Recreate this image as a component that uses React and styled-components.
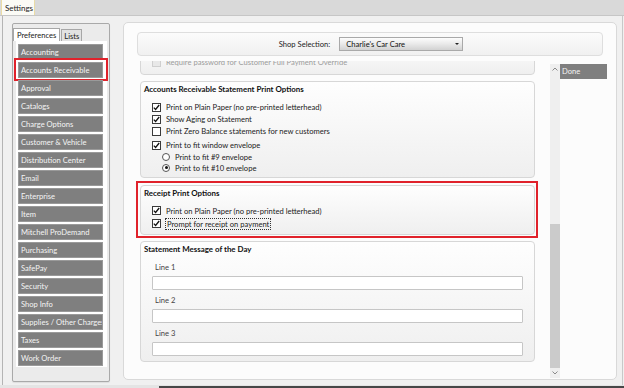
import React from 'react';
import styled, { createGlobalStyle } from 'styled-components';

const Global = createGlobalStyle`
  html, body { margin: 0; padding: 0; background: #f0f0f0; }
  body { font-family: Lato, "Open Sans", sans-serif; }
  * { box-sizing: border-box; }
`;

const FS = '7.6px';

const Window = styled.div`
  width: 624px;
  height: 388px;
  display: flex;
  flex-direction: column;
  background: #f0f0f0;
  overflow: hidden;
`;

const TabStrip = styled.div`
  height: 16px;
  flex: none;
  background: #d9d9d9;
  border-bottom: 1px solid #c6c6c6;
  display: flex;
  align-items: flex-end;
  padding-left: 1px;
`;

const WindowTab = styled.div`
  height: 16px;
  width: 34px;
  padding: 0 3px;
  background: #fbfbf6;
  border: 1px solid #eadca6;
  border-bottom: none;
  font-size: 8px;
  color: #222;
  display: flex;
  align-items: center;
`;

const Body = styled.div`
  flex: 1;
  display: flex;
  gap: 13px;
  margin-left: 2px;
  margin-right: 1px;
  border-left: 1px solid #b4b4b4;
  border-right: 1px solid #c8c8c8;
  padding: 6px 5px 2px 9px;
  min-height: 0;
`;

const Footer = styled.div`
  height: 3px;
  flex: none;
  display: flex;
  background: #e4e4e4;
`;

const FooterGap = styled.div`
  width: 159px;
`;

const FooterDark = styled.div`
  flex: 1;
  background: #474747;
  margin-top: 1px;
`;

/* ---------- left panel ---------- */
const LeftPanel = styled.div`
  width: 98px;
  margin-top: 1px;
  margin-bottom: 1px;
  background: #ebebeb;
  border: 1px solid #a9a9a9;
  border-radius: 2px;
  box-shadow: 0 1px 1px rgba(0,0,0,0.08);
  display: flex;
  flex-direction: column;
  padding-top: 4px;
`;

const PanelTabs = styled.div`
  display: flex;
  align-items: flex-end;
  height: 13px;
`;

const PanelTab = styled.div`
  height: ${p => (p.$active ? 13 : 12)}px;
  padding: 0 ${p => (p.$active ? 3 : 2)}px;
  font-size: ${FS};
  color: #1a1a1a;
  background: ${p => (p.$active ? '#ffffff' : '#e2e2e2')};
  border: 1px solid #a7a7a7;
  border-bottom: none;
  display: flex;
  align-items: center;
  margin-right: 1px;
`;

const ListArea = styled.div`
  margin: 0 2px 0 3px;
  background: #ffffff;
  padding: 3px 4px 1px 2px;
  display: flex;
  flex-direction: column;
  gap: 2px;
`;

const NavItem = styled.div`
  height: 16px;
  background: #7f7f7f;
  border: 1px solid #9a9a9a;
  color: #f4f4f4;
  font-size: ${FS};
  line-height: 14px;
  padding-left: 2px;
  white-space: nowrap;
  overflow: hidden;
`;

const NavHighlight = styled.div`
  border: 2px solid #e0222b;
  margin: -4px -5px -3px -4px;
  padding: 2px 3px 1px 2px;
`;

/* ---------- main panel ---------- */
const MainPanel = styled.div`
  flex: 1;
  background: #fcfcfc;
  border: 1px solid #d9d9d9;
  border-radius: 5px;
  padding: 9px 0 0 13px;
  display: flex;
  flex-direction: column;
  min-height: 0;
  margin-bottom: 3px;
`;

const ShopBar = styled.div`
  width: 466px;
  height: 24px;
  flex: none;
  border: 1px solid #dedede;
  border-radius: 4px;
  background: linear-gradient(#fbfbfb, #f0f0f0);
  display: flex;
  align-items: center;
  justify-content: center;
  gap: 9px;
  padding-left: 2px;
`;

const ShopLabel = styled.span`
  font-size: ${FS};
  color: #222;
`;

const Dropdown = styled.div`
  width: 124px;
  height: 14px;
  border: 1px solid #a9a9a9;
  background: linear-gradient(#fdfdfd, #e9e9e9 50%, #d2d2d2);
  display: flex;
  align-items: center;
  justify-content: space-between;
  padding: 0 3px 0 6px;
  font-size: ${FS};
  color: #111;
`;

const DropArrow = styled.span`
  width: 0;
  height: 0;
  border-left: 2px solid transparent;
  border-right: 2px solid transparent;
  border-top: 2px solid #222;
`;

const ContentRow = styled.div`
  flex: 1;
  display: flex;
  min-height: 0;
  margin-top: 5px;
`;

const Viewport = styled.div`
  width: 404px;
  margin-left: -2px;
  padding: 0 4px 0 5px;
  overflow: hidden;
  display: flex;
  flex-direction: column;
  gap: 6px;
`;

const Group = styled.div`
  border: 1px solid #d7d7d7;
  border-radius: 4px;
  background: linear-gradient(#fefefe, #efefef);
  padding: ${p => p.$pad || '2px 3px 4px 3px'};
  margin-top: ${p => p.$mt || 0};
  flex: none;
`;

const GroupTitle = styled.div`
  font-size: 7.9px;
  font-weight: 700;
  color: #111;
  height: 11px;
  line-height: 11px;
  margin-bottom: ${p => p.$mb || 6}px;
`;

const Highlight = styled.div`
  border: 2px solid #e0222b;
  margin: -3px -3px -3px -4px;
  padding: 2px 1px 1px 2px;
  flex: none;
`;

const OptionRow = styled.div`
  display: flex;
  align-items: center;
  gap: 5px;
  height: ${p => p.$h || 12}px;
  padding-left: ${p => p.$indent || 8}px;
  font-size: ${FS};
  color: ${p => (p.$disabled ? '#9c9c9c' : '#222')};
  margin-bottom: ${p => p.$mb || 0}px;
`;

const Box = styled.span`
  width: 9px;
  height: 9px;
  flex: none;
  border: 1px solid ${p => (p.$disabled ? '#cfcfcf' : '#3a3a3a')};
  background: ${p => (p.$disabled ? '#e8e8e8' : '#fff')};
  display: flex;
  align-items: center;
  justify-content: center;
`;

const Radio = styled.span`
  width: 8px;
  height: 8px;
  flex: none;
  border-radius: 50%;
  border: 1px solid #555;
  background: #fff;
  display: flex;
  align-items: center;
  justify-content: center;
  &::after {
    content: '';
    width: 3px;
    height: 3px;
    border-radius: 50%;
    background: ${p => (p.$on ? '#111' : 'transparent')};
  }
`;

const FocusText = styled.span`
  outline: 1px dotted #333;
  outline-offset: 0px;
  padding: 0 1px;
`;

const FieldLabel = styled.div`
  font-size: ${FS};
  color: #444;
  padding-left: 11px;
  height: 11px;
  line-height: 11px;
  margin-bottom: 3px;
  margin-top: 1px;
`;

const TextInput = styled.div`
  margin: 0 0 5px 8px;
  width: 371px;
  height: 14px;
  border: 1px solid #c6c6c6;
  background: #fff;
  border-radius: 1px;
`;

const SideColumn = styled.div`
  display: flex;
  align-items: flex-start;
  margin-left: 11px;
  padding-top: 3px;
`;

const ScrollTrack = styled.div`
  width: 10px;
  height: 314px;
  background: #efefef;
  display: flex;
  flex-direction: column;
  align-items: center;
`;

const ScrollArrow = styled.div`
  height: 10px;
  display: flex;
  align-items: center;
  justify-content: center;
  flex: none;
`;

const ScrollSpace = styled.div`
  flex: 1;
`;

const ScrollThumb = styled.div`
  width: 10px;
  height: 144px;
  background: #cbcbcb;
`;

const DoneButton = styled.div`
  width: 47px;
  height: 15px;
  background: #7f7f7f;
  color: #f2f2f2;
  font-size: ${FS};
  line-height: 15px;
  padding-left: 2px;
`;

const Check = ({ on = true, disabled }) => (
  <Box $disabled={disabled}>
    {on && (
      <svg width="7" height="7" viewBox="0 0 7 7">
        <path d="M0.8 3.6 L2.6 5.5 L6.2 1" fill="none" stroke="#111" strokeWidth="1.3" />
      </svg>
    )}
  </Box>
);

const Chevron = ({ up }) => (
  <svg width="6" height="4" viewBox="0 0 6 4">
    <path d={up ? 'M0.5 3.5 L3 1 L5.5 3.5' : 'M0.5 0.5 L3 3 L5.5 0.5'} fill="none" stroke="#8a8a8a" strokeWidth="1" />
  </svg>
);

const navItems = [
  'Accounting', 'Accounts Receivable', 'Approval', 'Catalogs', 'Charge Options',
  'Customer & Vehicle', 'Distribution Center', 'Email', 'Enterprise', 'Item',
  'Mitchell ProDemand', 'Purchasing', 'SafePay', 'Security', 'Shop Info',
  'Supplies / Other Charges', 'Taxes', 'Work Order',
];

export default function App() {
  return (
    <Window>
      <Global />
      <TabStrip>
        <WindowTab>Settings</WindowTab>
      </TabStrip>
      <Body>
        <LeftPanel>
          <PanelTabs>
            <PanelTab $active>Preferences</PanelTab>
            <PanelTab>Lists</PanelTab>
          </PanelTabs>
          <ListArea>
            {navItems.map(n =>
              n === 'Accounts Receivable' ? (
                <NavHighlight key={n}>
                  <NavItem>{n}</NavItem>
                </NavHighlight>
              ) : (
                <NavItem key={n}>{n}</NavItem>
              )
            )}
          </ListArea>
        </LeftPanel>

        <MainPanel>
          <ShopBar>
            <ShopLabel>Shop Selection:</ShopLabel>
            <Dropdown>
              <span>Charlie's Car Care</span>
              <DropArrow />
            </Dropdown>
          </ShopBar>
          <ContentRow>
            <Viewport>
              <Group $mt="-19px" $pad="13px 3px 6px 3px">
                <OptionRow $disabled>
                  <Check on={false} disabled />
                  <span>Require password for Customer Full Payment Override</span>
                </OptionRow>
              </Group>

              <Group>
                <GroupTitle>Accounts Receivable Statement Print Options</GroupTitle>
                <OptionRow><Check /><span>Print on Plain Paper (no pre-printed letterhead)</span></OptionRow>
                <OptionRow><Check /><span>Show Aging on Statement</span></OptionRow>
                <OptionRow $mb={2}><Check on={false} /><span>Print Zero Balance statements for new customers</span></OptionRow>
                <OptionRow><Check /><span>Print to fit window envelope</span></OptionRow>
                <OptionRow $h={11} $indent={18}><Radio /><span>Print to fit #9 envelope</span></OptionRow>
                <OptionRow $h={11} $indent={18}><Radio $on /><span>Print to fit #10 envelope</span></OptionRow>
              </Group>

              <Highlight>
                <Group>
                  <GroupTitle $mb={5}>Receipt Print Options</GroupTitle>
                  <OptionRow $h={13}><Check /><span>Print on Plain Paper (no pre-printed letterhead)</span></OptionRow>
                  <OptionRow $h={13}><Check /><FocusText>Prompt for receipt on payment</FocusText></OptionRow>
                </Group>
              </Highlight>

              <Group $pad="2px 3px 0px 3px">
                <GroupTitle $mb={7}>Statement Message of the Day</GroupTitle>
                <FieldLabel>Line 1</FieldLabel>
                <TextInput />
                <FieldLabel>Line 2</FieldLabel>
                <TextInput />
                <FieldLabel>Line 3</FieldLabel>
                <TextInput />
              </Group>
            </Viewport>
            <SideColumn>
              <ScrollTrack>
                <ScrollArrow><Chevron up /></ScrollArrow>
                <ScrollSpace />
                <ScrollThumb />
                <ScrollArrow><Chevron /></ScrollArrow>
              </ScrollTrack>
              <DoneButton>Done</DoneButton>
            </SideColumn>
          </ContentRow>
        </MainPanel>
      </Body>
      <Footer>
        <FooterGap />
        <FooterDark />
      </Footer>
    </Window>
  );
}
